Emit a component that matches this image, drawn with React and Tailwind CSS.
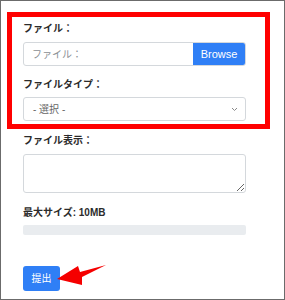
import React from 'react';

const font = { fontFamily: '"Liberation Sans", "Noto Sans CJK JP", sans-serif' };

const App = () => {
  return (
    <div style={font} className="relative w-[285px] h-[300px] border border-[#6b6b6b] bg-white text-[#2b2b2b] overflow-hidden">
      {/* Red highlight frame */}
      <div className="ml-[6px] mt-[11px] w-[263px] h-[117px] border-[5px] border-[#ff0000] pl-[11px] pt-[4px]">
        <label className="block text-[10px] leading-[15px] font-bold mb-[6px]">ファイル：</label>
        <div className="flex w-[223px] h-[24px] border border-[#d4d8dc] rounded-[3px] overflow-hidden">
          <div className="flex-1 flex items-center pl-[8px] text-[10px] text-[#8a8f94]">ファイル：</div>
          <div className="w-[52px] bg-[#2f7ff6] text-white text-[11px] flex items-center justify-center">Browse</div>
        </div>

        <label className="block text-[10px] leading-[15px] font-bold mt-[11px] mb-[5px]">ファイルタイプ：</label>
        <div className="flex items-center justify-between w-[223px] h-[24px] border border-[#d4d8dc] rounded-[3px] px-[9px]">
          <span className="text-[10px] text-[#666]">- 選択 -</span>
          <svg width="7" height="5" viewBox="0 0 7 5" className="mr-[-2px]">
            <path d="M1 1 L3.5 3.5 L6 1" fill="none" stroke="#8a8a8a" strokeWidth="1" />
          </svg>
        </div>
      </div>

      <div className="pl-[22px] w-[245px]">
        <label className="block text-[10px] leading-[15px] font-bold mt-[4px] mb-[6px]">ファイル表示：</label>
        <textarea readOnly className="block w-[223px] h-[39px] border border-[#d4d8dc] rounded-[3px] resize-y outline-none" />

        <div className="text-[10px] leading-[15px] font-bold mt-[12px] mb-[5px]">最大サイズ: 10MB</div>
        <div className="w-[223px] h-[10px] bg-[#e9ecef] rounded-[2px]" />

        <button className="mt-[31px] w-[37px] h-[25px] bg-[#2f7ff6] text-white text-[10px] rounded-[3px] flex items-center justify-center">
          提出
        </button>
      </div>

      {/* Red arrow */}
      <svg className="absolute left-[55px] top-[262px]" width="52" height="24" viewBox="0 0 52 24">
        <polygon points="1,16 22,3 24,9 50,2 26,14 26,22" fill="#f50000" />
      </svg>
    </div>
  );
};

export default App;
